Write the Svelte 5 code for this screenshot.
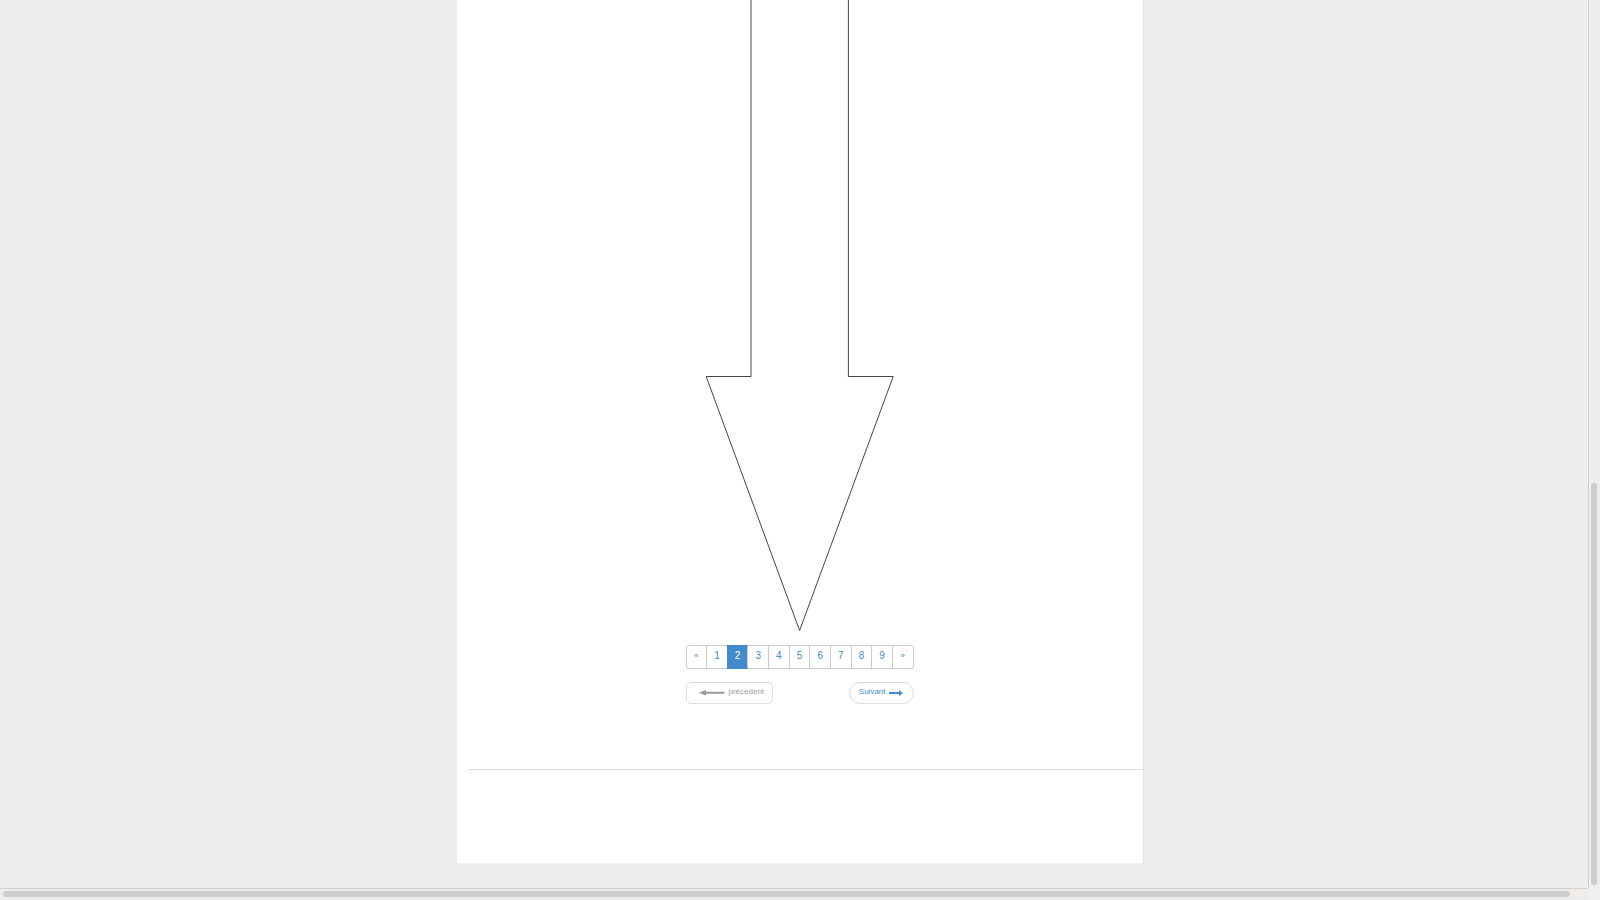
<script>
  const pages = ['«', '1', '2', '3', '4', '5', '6', '7', '8', '9', '»'];
  let current = $state('2');
</script>

<div class="window">
  <main class="view">
    <div class="sheet">
      <svg class="arrow" width="190" height="632" viewBox="0 0 190 632" aria-hidden="true">
        <path d="M46 -5V376.5H1.2L94.6 630.5L188.2 376.5H143.4V-5" fill="none" stroke="#444" stroke-width="1" />
      </svg>
      <nav class="navigation">
        <ul class="pagination">
          {#each pages as page}
            <li><a href="#{page}" class:active={page === current} class:symbol={page === '«' || page === '»'}>{page}</a></li>
          {/each}
        </ul>
        <div class="pager">
          <a class="previous" href="#previous">
            <svg width="26" height="8" viewBox="0 0 26 8" aria-hidden="true"><path d="M-1 3.7L6 0.9V2.8H24.5V4.8H6V6.6Z" fill="#999" /></svg>
            <span>précedent</span>
          </a>
          <a class="next" href="#next">
            <span>Suivant</span>
            <svg width="14" height="8" viewBox="0 0 14 8" aria-hidden="true"><path d="M0 3.1H10V1L13.8 4L10 7.2V4.9H0Z" fill="#428bca" /></svg>
          </a>
        </div>
      </nav>
      <hr />
    </div>
  </main>
  <div class="track vertical"><div class="thumb"></div></div>
  <div class="track horizontal"><div class="thumb"></div></div>
  <div class="corner"></div>
</div>

<style>
  :global(body) { margin: 0; background: #eee; }
  * { box-sizing: border-box; }
  .window {
    display: grid;
    grid-template: minmax(0, 1fr) 12px / minmax(0, 1fr) 12px;
    height: 100vh;
    background: #eee;
    font-family: "Liberation Sans", Arial, sans-serif;
  }
  .view { display: flex; justify-content: center; padding: 0 0 25px 12px; overflow: hidden; }
  .sheet {
    display: flex;
    flex-direction: column;
    align-items: center;
    width: 100%;
    max-width: 687px;
    background: #fff;
    border-right: 1px solid #e2e2e2;
  }
  .arrow { flex: none; overflow: visible; }
  .navigation { width: 228px; margin-top: 13px; }
  .pagination {
    display: flex;
    height: 24px;
    margin: 0;
    padding: 0;
    list-style: none;
    border: 1px solid #ccc;
    border-radius: 3px;
  }
  li { flex: 1; display: flex; }
  li + li { border-left: 1px solid #ccc; }
  li a {
    flex: 1;
    color: #428bca;
    font-size: 10px;
    line-height: 20px;
    text-align: center;
    text-decoration: none;
  }
  li .symbol { font-size: 8px; }
  li .active { margin: -1px; padding-top: 1px; background: #428bca; color: #fff; }
  .pager { display: flex; justify-content: space-between; margin-top: 13px; }
  .pager a {
    display: flex;
    gap: 3px;
    height: 22px;
    border: 1px solid #ddd;
    font-size: 8px;
    line-height: 18px;
    text-decoration: none;
  }
  .pager svg { margin-top: 6px; overflow: visible; }
  .previous { padding: 0 8px 0 13px; border-radius: 5px; color: #999; }
  .next { padding: 0 10px 0 9px; border-radius: 11px; color: #428bca; }
  hr { align-self: stretch; margin: 65px -1px 0 11px; border: 0; border-top: 1px solid #ddd; }
  .track { background: #eeedec; }
  .thumb { border-radius: 3px; background: #cecece; }
  .vertical { display: grid; grid-template-rows: 483fr 402fr 3fr; padding: 0 3px 0 2px; border-left: 1px solid #d5cec9; }
  .vertical .thumb { grid-row: 2; }
  .horizontal { padding: 2px 18px 3px 3px; border-top: 1px solid #d5cec9; }
  .horizontal .thumb { height: 6px; }
  .corner { background: #f0f0f0; }
</style>
